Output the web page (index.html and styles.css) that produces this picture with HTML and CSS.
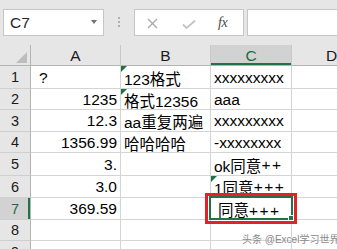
FILE: index.html
```html
<!DOCTYPE html>
<html>
<head>
<meta charset="utf-8">
<link rel="stylesheet" href="styles.css">
</head>
<body>
<div class="app">
  <div class="fbar">
    <div class="namebox"><span class="nb-text">C7</span><span class="nb-arrow"></span></div>
    <div class="grip"><i></i><i></i><i></i></div>
    <div class="fbtns">
      <svg class="ic-x" width="11" height="11" viewBox="0 0 11 11"><path d="M1 1 L10 10 M10 1 L1 10" stroke="#a8a8a8" stroke-width="1.3" fill="none"/></svg>
      <svg class="ic-ok" width="14" height="9" viewBox="0 0 14 9"><path d="M1 4.5 L4.5 8 L13 0.8" stroke="#c4c4c4" stroke-width="1.8" fill="none"/></svg>
      <span class="fx">fx</span>
    </div>
    <div class="finput"></div>
  </div>
  <div class="grid">
    <div class="corner"><span class="sa"></span></div>
    <div class="ch">A</div><div class="ch">B</div><div class="ch ch-sel">C</div><div class="ch">D</div>

    <div class="rh">1</div><div class="c q">?</div><div class="c tg">123格式</div><div class="c">xxxxxxxxx</div><div class="c"></div>
    <div class="rh">2</div><div class="c r">1235</div><div class="c tg">格式12356</div><div class="c">aaa</div><div class="c"></div>
    <div class="rh">3</div><div class="c r">12.3</div><div class="c">aa重复两遍</div><div class="c">xxxxxxxxx</div><div class="c"></div>
    <div class="rh">4</div><div class="c r">1356.99</div><div class="c">哈哈哈哈</div><div class="c">-xxxxxxxx</div><div class="c"></div>
    <div class="rh">5</div><div class="c r">3.</div><div class="c"></div><div class="c">ok同意<span class="pl">++</span></div><div class="c"></div>
    <div class="rh">6</div><div class="c r">3.0</div><div class="c"></div><div class="c tg">1同意<span class="pl">+++</span></div><div class="c"></div>
    <div class="rh rh-sel">7</div><div class="c r">369.59</div><div class="c"></div><div class="c active"><span class="ctext">同意<span class="pl">+++</span></span><span class="selbox"><span class="handle"></span></span><span class="redbox"></span></div><div class="c"></div>
    <div class="rh">8</div><div class="c"></div><div class="c"></div><div class="c"></div><div class="c"></div>
    <div class="rh">9</div><div class="c"></div><div class="c"></div><div class="c"></div><div class="c"></div>
  </div>
  <div class="watermark">头条 @Excel学习世界</div>
</div>
</body>
</html>
```

FILE: styles.css
```css
html, body {
  margin: 0;
  padding: 0;
}
body {
  width: 337px;
  height: 249px;
  overflow: hidden;
  background: #fff;
  font-family: "Liberation Sans", "Noto Sans CJK SC", sans-serif;
  color: #000;
}
.app {
  position: relative;
  width: 337px;
  height: 249px;
  overflow: hidden;
}
.fbar {
  height: 45px;
  background: #e6e6e6;
  display: flex;
  align-items: flex-start;
  padding: 9px 0 0 3px;
  box-sizing: border-box;
}
.namebox {
  width: 101px;
  height: 27px;
  box-sizing: border-box;
  border: 1px solid #c6c6c6;
  background: #fff;
  display: flex;
  align-items: center;
  justify-content: space-between;
  padding: 0 6px 0 6px;
  flex: none;
}
.nb-text {
  font-size: 15.5px;
  color: #262626;
}
.nb-arrow {
  width: 0;
  height: 0;
  border-left: 3.5px solid transparent;
  border-right: 3.5px solid transparent;
  border-top: 4px solid #707070;
  margin-top: -1px;
}
.grip {
  width: 30px;
  flex: none;
  display: flex;
  flex-direction: column;
  align-items: center;
  gap: 2px;
  padding-top: 8px;
}
.grip i {
  display: block;
  width: 2px;
  height: 2px;
  background: #b0b0b0;
}
.fbtns {
  width: 110px;
  height: 27px;
  box-sizing: border-box;
  border: 1px solid #c6c6c6;
  background: #fff;
  display: flex;
  align-items: center;
  padding-left: 12px;
  flex: none;
}
.ic-x { margin-top: 1px; }
.ic-ok { margin-left: 24px; margin-top: 3px; }
.fx {
  margin-left: 22px;
  font-family: "Liberation Serif", serif;
  font-style: italic;
  font-size: 14px;
  color: #4a4a4a;
  letter-spacing: -0.5px;
}
.finput {
  margin-left: 3px;
  flex: 1;
  height: 27px;
  box-sizing: border-box;
  border: 1px solid #c6c6c6;
  border-right: none;
  background: #fff;
}

.grid {
  display: grid;
  grid-template-columns: 31px 90px 90px 81px 80px;
  grid-template-rows: 21px 23px 21px 22px 21px 23px 22px 22px 21px 22px;
}
.grid > div {
  box-sizing: border-box;
  border-right: 1px solid #d4d4d4;
  border-bottom: 1px solid #d4d4d4;
  display: flex;
  align-items: center;
  white-space: nowrap;
  position: relative;
}
.corner {
  background: #e6e6e6;
  border-right-color: #b4b4b4 !important;
  border-bottom-color: #b4b4b4 !important;
}
.sa {
  position: absolute;
  right: 3px;
  bottom: 2px;
  width: 0;
  height: 0;
  border-left: 11px solid transparent;
  border-bottom: 11px solid #bdbdbd;
}
.ch {
  background: #e6e6e6;
  justify-content: center;
  font-size: 15.5px;
  color: #1a1a1a;
  border-right-color: #c8c8c8 !important;
  border-bottom-color: #b4b4b4 !important;
  padding-top: 1px;
}
.ch-sel {
  background: #d2d2d2;
  color: #1f6b43;
  box-shadow: inset 0 -2px 0 #217346;
}
.rh {
  background: #e6e6e6;
  justify-content: center;
  font-size: 14.5px;
  color: #1a1a1a;
  border-right-color: #b4b4b4 !important;
  border-bottom-color: #cfcfcf !important;
}
.rh-sel {
  background: #d2d2d2;
  color: #1f6b43;
  box-shadow: inset -2px 0 0 #217346;
}
.c {
  font-size: 15.5px;
  padding: 1px 3px 0 3px;
}
.c.r {
  justify-content: flex-end;
  padding-right: 3px;
}
.c.q {
  padding-left: 8px;
}
.pl {
  letter-spacing: 1.5px;
}
.tg::before {
  content: "";
  position: absolute;
  left: 0;
  top: 0;
  width: 0;
  height: 0;
  border-top: 6px solid #1e7145;
  border-right: 6px solid transparent;
}
.active {
  z-index: 2;
  overflow: visible;
}
.active .ctext {
  padding-left: 4px;
}
.selbox {
  position: absolute;
  left: -2px;
  top: -2px;
  right: -2px;
  bottom: -1px;
  border: 2px solid #217346;
}
.handle {
  position: absolute;
  right: -3px;
  bottom: -3px;
  width: 4px;
  height: 4px;
  background: #217346;
  border: 1px solid #fff;
}
.redbox {
  position: absolute;
  left: -6px;
  top: -5px;
  right: -6px;
  bottom: -5px;
  border: 3px solid #e3212a;
}
.watermark {
  position: absolute;
  left: 242px;
  top: 231px;
  font-size: 10px;
  color: #8a8a8a;
  white-space: nowrap;
  text-shadow: 0 0 1px #fff;
}
```
